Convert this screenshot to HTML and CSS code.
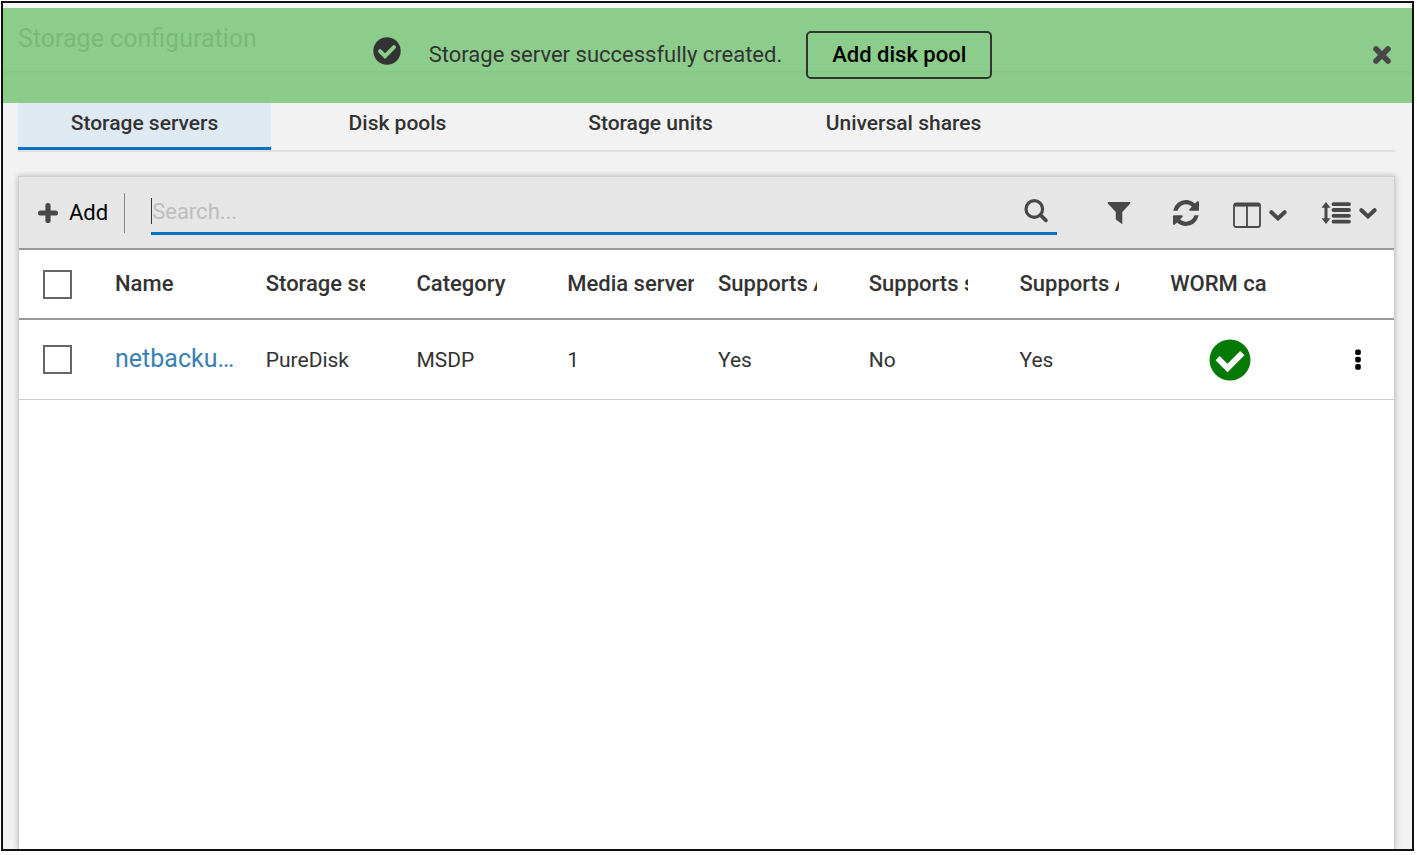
FILE: index.html
```html
<!DOCTYPE html>
<html lang="en">
<head>
<meta charset="utf-8">
<title>Storage configuration</title>
<link rel="stylesheet" href="styles.css">
</head>
<body>
<div class="app">
  <div class="notice" role="status">
    <div class="notice-body">
      <svg class="notice-icon" viewBox="0 0 28 28" aria-hidden="true"><circle cx="14" cy="14" r="13.7" fill="#333"/><path d="M7 14.200l5 5 9-9" fill="none" stroke="#8ccd8c" stroke-width="4" stroke-linecap="round"/></svg>
      <span class="notice-text">Storage server successfully created.</span>
      <button class="notice-action" type="button">Add disk pool</button>
    </div>
    <button class="notice-close" type="button" aria-label="Close">
      <svg width="20" height="20" viewBox="0 0 20 20"><path d="M4 4l12 12M16 4L4 16" stroke="#484848" stroke-width="5.6" stroke-linecap="round"/></svg>
    </button>
  </div>
  <header class="topbar"><h1 class="title">Storage configuration</h1></header>
  <main class="content">
    <nav class="tabs">
      <a class="tab tab-active" href="#servers">Storage servers</a>
      <a class="tab" href="#pools">Disk pools</a>
      <a class="tab" href="#units">Storage units</a>
      <a class="tab" href="#shares">Universal shares</a>
    </nav>
    <section class="panel">
      <div class="toolbar">
        <button class="add" type="button">
          <svg width="20" height="20" viewBox="0 0 20 20" aria-hidden="true"><path d="M10 2.6v14.8M2.6 10h14.8" stroke="#484848" stroke-width="5.2" stroke-linecap="round"/></svg>
          Add
        </button>
        <div class="search">
          <input class="search-input" type="text" placeholder="Search..." aria-label="Search">
          <svg width="26" height="26" viewBox="0 0 26 26" aria-hidden="true"><circle cx="11.3" cy="11" r="8.3" fill="none" stroke="#484848" stroke-width="3.2"/><path d="M17.5 17.2l5.4 5.2" stroke="#484848" stroke-width="3.8" stroke-linecap="round"/></svg>
        </div>
        <div class="tools">
          <button class="tool" type="button" aria-label="Filter">
            <svg width="24" height="24" viewBox="0 0 24 24"><path d="M1 1h22q.8.8 0 1.800L15.300 11v12.200L8.800 18.500V11L1 2.800Q.2 1.800 1 1z" fill="#484848"/></svg>
          </button>
          <button class="tool" type="button" aria-label="Refresh">
            <svg width="26" height="26" viewBox="0 0 1536 1536"><path fill="#484848" d="M1511 928q0 5-1 7-64 268-268 434.500T764 1536q-146 0-282.500-55T238 1324l-129 129q-19 19-45 19t-45-19-19-45V960q0-26 19-45t45-19h448q26 0 45 19t19 45-19 45l-137 137q71 66 161 102t187 36q134 0 250-65t186-179q11-17 53-117 8-23 30-23h192q13 0 22.500 9.500t9.500 22.500zm25-800v448q0 26-19 45t-45 19h-448q-26 0-45-19t-19-45 19-45l138-138Q969 256 768 256q-134 0-250 65T332 500q-11 17-53 117-8 23-30 23H50q-13 0-22.500-9.500T18 608v-7q65-268 270-434.500T768 0q146 0 284 55.500T1297 212l130-129q19-19 45-19t45 19 19 45z"/></svg>
          </button>
          <button class="tool tool-columns" type="button" aria-label="Columns">
            <svg width="28" height="26" viewBox="0 0 28 26"><rect x="1" y="1.500" width="26" height="23.500" rx="2" fill="none" stroke="#484848" stroke-width="1.800"/><path d="M1 2.800h26" stroke="#484848" stroke-width="3.600"/><path d="M14 4v21" stroke="#484848" stroke-width="1.800"/></svg>
            <svg width="18" height="12" viewBox="0 0 18 12"><path d="M2.400 3.200L9 9.400l6.600-6.200" fill="none" stroke="#484848" stroke-width="4" stroke-linecap="round"/></svg>
          </button>
          <button class="tool" type="button" aria-label="Row height">
            <svg width="30" height="24" viewBox="0 0 30 24"><path d="M5 4v16" stroke="#484848" stroke-width="3"/><path d="M5 1l4.500 5.800H.5zM5 23l4.500-5.800H.5z" fill="#484848"/><path d="M12.500 3.200h15.500M12.500 9h15.500M12.500 14.800h15.500M12.500 20.600h15.500" stroke="#484848" stroke-width="3.800" stroke-linecap="round"/></svg>
            <svg width="18" height="12" viewBox="0 0 18 12"><path d="M2.400 3.200L9 9.400l6.600-6.200" fill="none" stroke="#484848" stroke-width="4" stroke-linecap="round"/></svg>
          </button>
        </div>
      </div>
      <table class="grid">
        <colgroup><col class="col-check"><col><col><col><col><col><col><col><col><col class="col-menu"></colgroup>
        <thead>
          <tr>
            <th class="check-cell"><input class="check" type="checkbox" aria-label="Select all"></th>
            <th><div class="head">Name</div></th>
            <th><div class="head">Storage se</div></th>
            <th><div class="head">Category</div></th>
            <th><div class="head head-wide">Media server</div></th>
            <th><div class="head">Supports A</div></th>
            <th><div class="head">Supports s</div></th>
            <th><div class="head">Supports A</div></th>
            <th><div class="head">WORM ca</div></th>
            <th></th>
          </tr>
        </thead>
        <tbody>
          <tr>
            <td class="check-cell"><input class="check" type="checkbox" aria-label="Select row"></td>
            <td><a class="name" href="#server">netbacku…</a></td>
            <td>PureDisk</td>
            <td>MSDP</td>
            <td>1</td>
            <td>Yes</td>
            <td>No</td>
            <td>Yes</td>
            <td class="worm"><svg class="worm-icon" viewBox="0 0 42 42" role="img" aria-label="Yes"><circle cx="21" cy="21" r="20.500" fill="#047a04"/><path d="M10.800 21.300l7.700 7.700L31.200 16.300" fill="none" stroke="#fff" stroke-width="6" stroke-linecap="square"/></svg></td>
            <td class="menu-cell"><button class="menu" type="button" aria-label="Row actions"><svg width="8" height="22" viewBox="0 0 8 22"><rect x="1.200" y=".5" width="5.600" height="5.600" rx="1.800"/><rect x="1.200" y="7.800" width="5.600" height="5.600" rx="1.800"/><rect x="1.200" y="15.100" width="5.600" height="5.600" rx="1.800"/></svg></button></td>
          </tr>
        </tbody>
      </table>
    </section>
  </main>
</div>
</body>
</html>
```
FILE: styles.css
```css
* { box-sizing: border-box; }

body {
  margin: 0;
  padding: 1px 3px 4px 1px;
  min-height: 100vh;
  display: flex;
  background: #fff;
  font-family: Roboto, "Liberation Sans", sans-serif;
  font-size: 21px;
  line-height: 24px;
  color: #333;
}

button {
  margin: 0;
  padding: 0;
  border: 0;
  background: none;
  font: inherit;
  color: #000;
}

svg { display: block; flex: none; }

.app {
  position: relative;
  flex: 1;
  min-width: 0;
  display: flex;
  flex-direction: column;
  border: 2px solid #111;
  background: #f2f2f2;
  overflow: hidden;
}

/* Success message over the page header */
.notice {
  position: absolute;
  top: 5px;
  left: 0;
  right: 0;
  height: 95px;
  padding-bottom: 2px;
  display: flex;
  align-items: center;
  background: rgba(128, 200, 128, 0.9);
}

.notice-body {
  flex: 1;
  display: flex;
  align-items: center;
  justify-content: center;
  padding-right: 4px;
}

.notice-icon { width: 28px; height: 28px; margin: 0 28px 8px 0; }

.notice-text { margin-right: 24px; font-size: 22px; }

.notice-action {
  height: 48px;
  padding: 0 24px;
  border: 2px solid #333;
  border-radius: 5px;
  font-size: 22px;
  font-weight: 500;
}

.notice-close { margin-right: 14px; padding: 6px; }

.topbar {
  height: 68px;
  padding: 20px 15px;
  background: #f8f8f8;
  box-shadow: 0 1px 5px rgba(0, 0, 0, 0.3);
}

.title { margin: 0; font-size: 25px; line-height: 32px; font-weight: 400; }

.content {
  flex: 1;
  display: flex;
  flex-direction: column;
  padding: 25px 17px 0 15px;
}

.tabs { display: flex; border-bottom: 2px solid #e0e0e0; }

.tab {
  flex: 0 0 253px;
  padding: 15px 0 12px;
  border-bottom: 3px solid transparent;
  text-align: center;
  font-weight: 500;
  color: #333;
  text-decoration: none;
}

.tab-active { background: #dfe9f2; border-bottom-color: #0572c6; }

.panel {
  flex: 1;
  margin-top: 24px;
  border: 1px solid #d0d0d0;
  border-bottom: 0;
  background: #fff;
  box-shadow: 0 0 6px rgba(0, 0, 0, 0.25);
}

.toolbar {
  display: flex;
  align-items: center;
  height: 73px;
  padding: 0 17px 0 19px;
  background: #e6e6e6;
  border-bottom: 2px solid #999;
}

.add {
  display: flex;
  align-items: center;
  gap: 11px;
  height: 40px;
  padding-right: 16px;
  border-right: 1px solid #888;
  font-size: 22px;
}

.search {
  flex: 1;
  display: flex;
  align-items: center;
  margin: 0 50px 0 26px;
  padding: 8px 8px 8px 0;
  border-bottom: 3px solid #0572c6;
}

.search-input {
  flex: 1;
  height: 26px;
  padding: 0;
  border: 0;
  border-left: 1px solid #333;
  background: none;
  font: inherit;
  font-size: 22px;
  color: #333;
  outline: 0;
}

.search-input::placeholder { color: #bdbdbd; }

.tools { display: flex; align-items: center; gap: 34px; }

.tool { display: flex; align-items: center; gap: 8px; }

.tool:nth-child(2) { margin-left: 8px; }

.tool-columns { padding-top: 5px; }

.grid { width: 100%; table-layout: fixed; border-collapse: separate; border-spacing: 0; }

.col-check { width: 96px; }
.col-menu { width: 73px; }

.grid th,
.grid td { padding: 0; text-align: left; vertical-align: middle; }

.grid th { height: 70px; border-bottom: 2px solid #999; font-size: 22px; font-weight: 500; }
.grid td { height: 80px; border-bottom: 1px solid #ccc; }

.grid .check-cell { padding-left: 24px; }

.head { width: 99px; overflow: hidden; white-space: nowrap; }
.head-wide { width: 127px; }

.check {
  display: block;
  appearance: none;
  width: 29px;
  height: 29px;
  margin: 0;
  border: 2px solid #666;
  background: #fff;
}

.name { font-size: 25px; color: #3a80b2; text-decoration: none; }

.worm-icon { width: 42px; height: 42px; margin-left: 39px; }

.menu { display: block; margin: 0 auto; }
```
